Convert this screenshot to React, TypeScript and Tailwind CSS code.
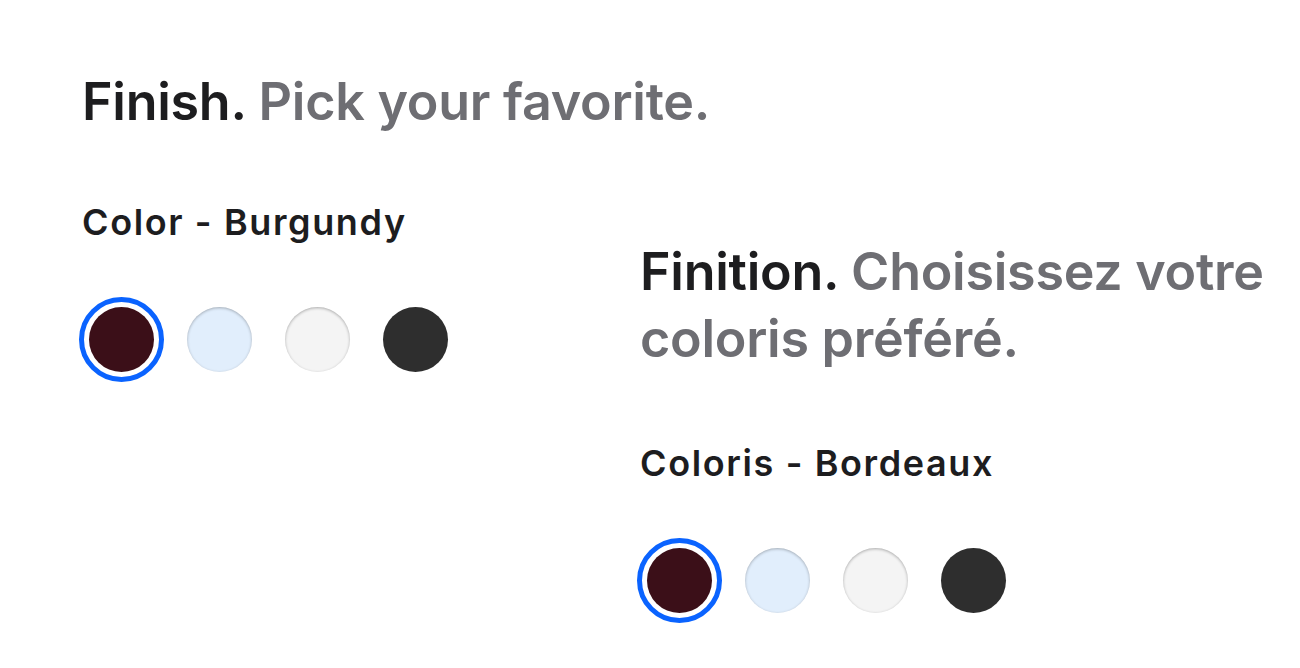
import React from "react";

const swatches = [
  { name: "burgundy", cls: "bg-[#3b0f18]" },
  { name: "blue", cls: "bg-[#e1eefc] shadow-[inset_0_1px_3px_rgba(0,0,0,0.28)]" },
  { name: "silver", cls: "bg-[#f4f4f4] shadow-[inset_0_1px_3px_rgba(0,0,0,0.3)]" },
  { name: "black", cls: "bg-[#2e2e2e]" },
];

function Swatches() {
  return (
    <div className="flex gap-[13px]">
      {swatches.map((s, i) => (
        <div
          key={s.name}
          className={
            "flex h-[85px] w-[85px] items-center justify-center rounded-full " +
            (i === 0 ? "border-[5px] border-[#0a63ff]" : "")
          }
        >
          <div className={"h-[65px] w-[65px] rounded-full " + s.cls} />
        </div>
      ))}
    </div>
  );
}

function Block({
  title,
  subtitle,
  label,
  width,
  labelGap,
}: {
  title: string;
  subtitle: string;
  label: string;
  width: string;
  labelGap: string;
}) {
  return (
    <div className={width}>
      <h2 className="text-[52px] font-semibold leading-[67px] tracking-[-0.005em] text-[#1d1d1f]">
        {title} <span className="text-[#6e6e73]">{subtitle}</span>
      </h2>
      <div
        className={
          labelGap +
          " text-[36px] font-semibold leading-[40px] tracking-[0.045em] text-[#1d1d1f]"
        }
      >
        {label}
      </div>
      <div className="mt-[55px] -ml-[3px]">
        <Swatches />
      </div>
    </div>
  );
}

export default function App() {
  return (
    <div
      className="h-[668px] w-[1300px] overflow-hidden bg-white"
      style={{ fontFamily: "Inter, 'Noto Sans', sans-serif" }}
    >
      <div className="flex pl-[82px] pt-[68px]">
        <div className="w-[558px]">
          <Block
            title="Finish."
            subtitle="Pick your favorite."
            label="Color - Burgundy"
            width="w-[660px]"
            labelGap="mt-[67px]"
          />
        </div>
        <div className="mt-[170px]">
          <Block
            title="Finition."
            subtitle="Choisissez votre coloris préféré."
            label="Coloris - Bordeaux"
            width="w-[650px]"
            labelGap="mt-[71px]"
          />
        </div>
      </div>
    </div>
  );
}
